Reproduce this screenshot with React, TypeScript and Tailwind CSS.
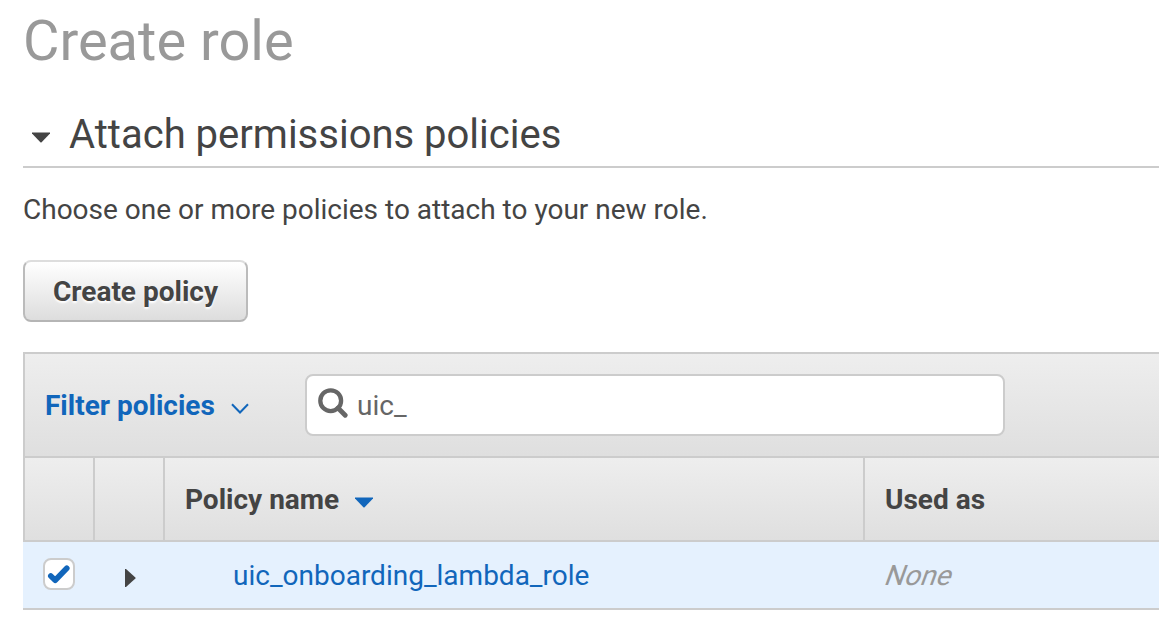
import React from "react";

function CaretDown({ className }: { className: string }) {
  return (
    <svg className={`h-[11px] w-[18px] shrink-0 fill-current ${className}`} viewBox="0 0 18 11">
      <path d="M0 .5h18v1L9.6 10.3q-.6.6-1.2 0L0 1.5z" />
    </svg>
  );
}

function FilterBar() {
  return (
    <div className="flex h-[102px] items-center border-l-2 border-[#ccc] bg-linear-to-b from-[#eee] to-[#dfdfdf] pl-5">
      <button className="flex w-[260px] items-center pt-[2px] text-[28px] font-bold text-[#1166bb]">
        Filter policies
        <svg className="ml-4 mt-[5px] h-3 w-[18px]" viewBox="0 0 18 12" fill="none" stroke="currentColor" strokeWidth="2">
          <path d="M1 1.3l8 8.2 8-8.2" />
        </svg>
      </button>
      <div className="flex h-[62px] w-[700px] items-center rounded-[8px] border-2 border-[#ccc] bg-white pl-[11px]">
        <svg className="mb-1 h-[30px] w-[30px]" viewBox="0 0 30 30" fill="none" stroke="#666">
          <circle cx="12.7" cy="12.7" r="10.4" strokeWidth="4.3" />
          <path d="M20 20l7.2 7.2" strokeWidth="4.8" strokeLinecap="round" />
        </svg>
        <span className="ml-[9px] pt-[2px] text-[28px] text-[#666]">uic_</span>
      </div>
    </div>
  );
}

export default function App() {
  return (
    <main className="h-[634px] w-full overflow-hidden bg-white pl-[23px] font-['Roboto',sans-serif] text-[#444]">
      <h1 className="h-[98px] pt-[7px] text-[56px] leading-[68px] text-[#999]">Create role</h1>
      <section>
        <div className="flex h-[70px] items-center border-b-2 border-[#ccc] pl-[9px] pt-[6px]">
          <CaretDown className="mt-[5px]" />
          <h2 className="ml-[19px] text-[40px] leading-[48px]">Attach permissions policies</h2>
        </div>
        <p className="mt-[26px] text-[28px] leading-[32px]">Choose one or more policies to attach to your new role.</p>
        <button className="mt-[34px] flex h-[62px] w-[225px] items-center justify-center rounded-[8px] border-2 border-x-[#bbb] border-b-[#b5b5b5] border-t-[#ddd] bg-linear-to-b from-white to-[#ddd] pt-[2px] text-[28px] font-bold [text-shadow:0_2px_2px_#fff]">
          Create policy
        </button>
      </section>
      <section className="mt-[30px] border-t-2 border-[#ccc]">
        <FilterBar />
        <div className="grid h-[86px] grid-cols-[72px_70px_700px_1fr] border-y-2 border-[#ccc] bg-linear-to-b from-[#eee] to-[#dfdfdf] text-[28px] font-bold">
          <div className="border-x-2 border-[#ccc]" />
          <div className="border-r-2 border-[#ccc]" />
          <div className="flex items-center border-r-2 border-[#ccc] pl-5 pt-[2px]">
            Policy name
            <CaretDown className="ml-4 mt-[5px] text-[#1166bb]" />
          </div>
          <div className="flex items-center pl-5 pt-[2px]">Used as</div>
        </div>
        <div className="grid h-[68px] grid-cols-[72px_70px_700px_1fr] items-center border-b-2 border-[#ccc] bg-[#e5f1fe] text-[28px]">
          <div className="mb-[2px] ml-5 flex h-8 w-8 items-center justify-center rounded-[8px] border-2 border-[#ccc] bg-white">
            <svg className="h-7 w-7" viewBox="0 0 28 28" fill="none" stroke="#1166bb" strokeWidth="5.6" strokeLinecap="round" strokeLinejoin="round">
              <path d="M5.8 16l4.4 4.2L21.8 8.2" />
            </svg>
          </div>
          <svg className="ml-[30px] mt-[6px] h-[18px] w-[11px]" viewBox="0 0 11 18">
            <path d="M0 0h1l9.4 8.4q.6.6 0 1.2L1 18H0z" fill="#444" />
          </svg>
          <span className="pl-[68px] pt-[2px] text-[#1166bb]">uic_onboarding_lambda_role</span>
          <span className="pl-[17px] pt-[2px] text-[#999]">
            <span className="inline-block origin-[0_78%] -skew-x-[20deg]">None</span>
          </span>
        </div>
      </section>
    </main>
  );
}
